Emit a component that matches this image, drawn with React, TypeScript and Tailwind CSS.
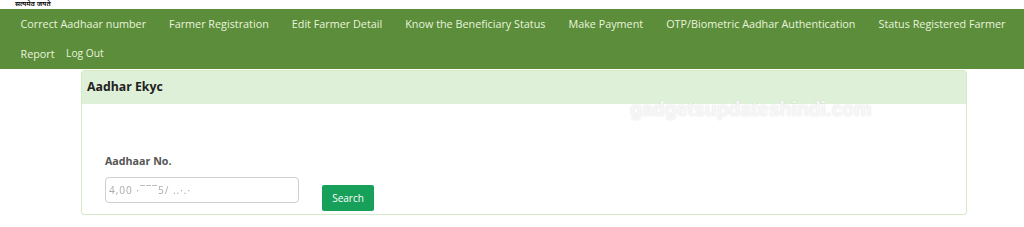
import React from "react";

const items = [
  "Correct Aadhaar number",
  "Farmer Registration",
  "Edit Farmer Detail",
  "Know the Beneficiary Status",
  "Make Payment",
  "OTP/Biometric Aadhar Authentication",
  "Status Registered Farmer",
  "Report",
];

export default function App() {
  return (
    <div className="w-[1024px] h-[227px] bg-white overflow-hidden relative" style={{ fontFamily: '"Open Sans", "Noto Sans", sans-serif' }}>
      <div className="h-[9px] pl-[15px] text-[7px] leading-[8px] text-black overflow-hidden font-semibold">सत्यमेव जयते</div>
      <nav className="bg-[#5b8d3b] h-[60px] pl-[9px] flex flex-wrap content-start">
        {items.map((t) => (
          <a key={t} className="px-[11.5px] h-[30px] flex items-center text-[10.8px] text-[#eaf4dc] whitespace-nowrap">
            {t}
          </a>
        ))}
        <a className="pl-0 h-[30px] flex items-center text-[10.2px] text-[#eaf4dc]">Log Out</a>
      </nav>
      <div className="ml-[81px] w-[886px] h-[145px] mt-[1px] border border-[#d6e9c6] rounded-[3px] relative">
        <div className="h-[33px] bg-[#dff0d8] flex items-center pl-[5px] text-[12.3px] font-bold text-[#222]">Aadhar Ekyc</div>
        <div className="pl-[23px] pt-[50px]">
          <div className="text-[10.7px] font-bold text-[#555] leading-[14px]">Aadhaar No.</div>
          <div className="flex items-start mt-[9px]">
            <div className="w-[194px] h-[26px] border border-[#cfcfcf] rounded-[4px] flex items-center pl-[3px]">
              <span className="text-[10px] text-[#aaa] blur-[0.7px] tracking-[1px]">4,00 ·‾‾‾5/ ..·.·</span>
            </div>
            <button className="ml-[23px] mt-[8px] w-[52px] h-[26px] bg-[#17a05a] rounded-[2px] text-white text-[10px]">Search</button>
          </div>
        </div>
        <div className="absolute left-[548px] top-[28px] text-[19.5px] leading-[20px] font-bold text-[#f6f6f6] [text-shadow:0_0_2px_rgba(0,0,0,0.12)] select-none" style={{ fontFamily: '"Liberation Sans", Arial, sans-serif' }}>
          gadgetsupdateshindi.com
        </div>
      </div>
    </div>
  );
}
